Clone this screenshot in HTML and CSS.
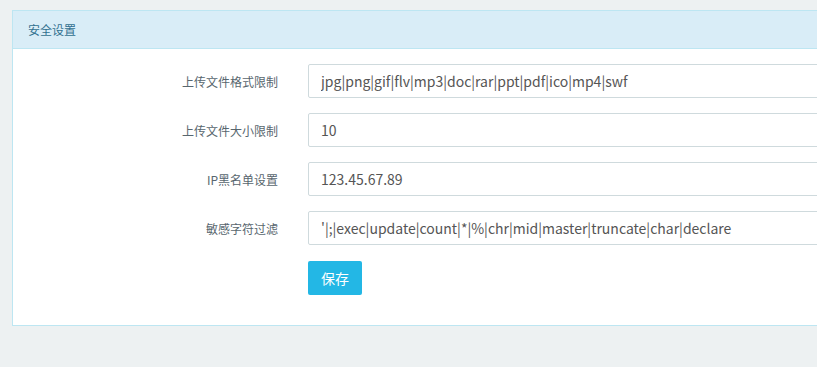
FILE: index.html
```html
<!DOCTYPE html>
<html lang="zh-CN">
<head>
<meta charset="utf-8">
<title>安全设置</title>
<link rel="stylesheet" href="styles.css">
</head>
<body>
<div class="panel">
  <div class="panel-heading">安全设置</div>
  <form class="panel-body">
    <div class="form-group">
      <label class="form-label">上传文件格式限制</label>
      <input class="form-control" type="text" value="jpg|png|gif|flv|mp3|doc|rar|ppt|pdf|ico|mp4|swf">
    </div>
    <div class="form-group">
      <label class="form-label">上传文件大小限制</label>
      <input class="form-control" type="text" value="10">
    </div>
    <div class="form-group">
      <label class="form-label">IP黑名单设置</label>
      <input class="form-control" type="text" value="123.45.67.89">
    </div>
    <div class="form-group">
      <label class="form-label">敏感字符过滤</label>
      <input class="form-control" type="text" value="'|;|exec|update|count|*|%|chr|mid|master|truncate|char|declare">
    </div>
    <div class="form-group">
      <span class="form-label"></span>
      <div><button class="btn" type="button">保存</button></div>
    </div>
  </form>
</div>
</body>
</html>
```
FILE: styles.css
```css
html, body {
  margin: 0;
  padding: 0;
  overflow: hidden;
}
body {
  background: #edf1f2;
  font-family: "Noto Sans CJK SC", sans-serif;
  font-size: 12px;
  color: #58666e;
  padding: 10px 0 0 12px;
  height: 367px;
  box-sizing: border-box;
}
.panel {
  margin-right: -40px;
  background: #fff;
  border: 1px solid #bde6f2;
}
.panel-heading {
  background: #d9edf7;
  color: #31708f;
  border-bottom: 1px solid #bde6f2;
  height: 37px;
  line-height: 37px;
  padding-left: 15px;
  font-size: 12px;
}
.panel-body {
  padding: 15px 0 0 0;
  margin: 0;
}
.form-group {
  display: grid;
  grid-template-columns: 265px 1fr;
  column-gap: 30px;
  align-items: center;
  margin-bottom: 15px;
}
.form-label {
  text-align: right;
  color: #58666e;
  font-size: 12px;
}
.form-control {
  box-sizing: border-box;
  height: 34px;
  border: 1px solid #cfdadd;
  border-radius: 2px;
  padding: 0 12px;
  font-family: "Noto Sans CJK SC", sans-serif;
  font-size: 14px;
  color: #555;
  outline: none;
  width: 100%;
}
.btn {
  height: 34px;
  width: 54px;
  border: none;
  border-radius: 2px;
  background: #23b7e5;
  color: #fff;
  font-family: "Noto Sans CJK SC", sans-serif;
  font-size: 14px;
  padding: 0;
  margin-top: 1px;
  margin-bottom: 15px;
}
```
